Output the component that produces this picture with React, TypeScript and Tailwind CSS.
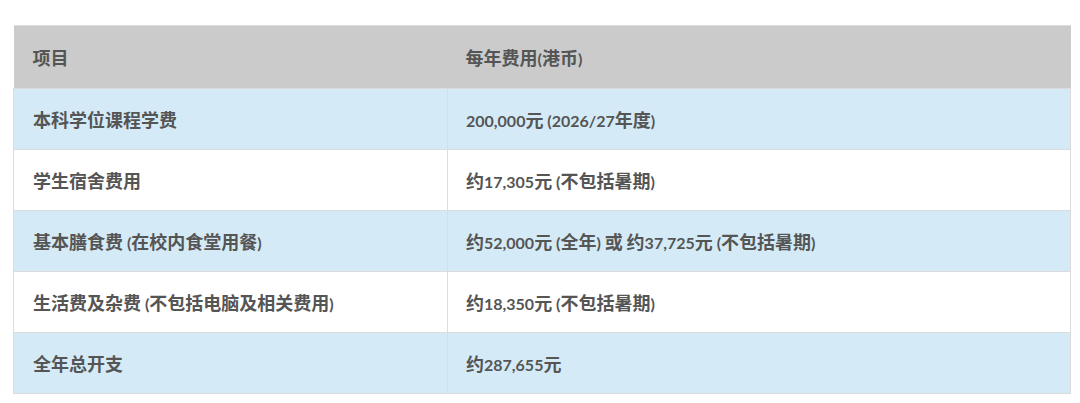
const rows = [
  { item: "本科学位课程学费", cost: "200,000元 (2026/27年度)", blue: true },
  { item: "学生宿舍费用", cost: "约17,305元 (不包括暑期)", blue: false },
  { item: "基本膳食费 (在校内食堂用餐)", cost: "约52,000元 (全年) 或 约37,725元 (不包括暑期)", blue: true },
  { item: "生活费及杂费 (不包括电脑及相关费用)", cost: "约18,350元 (不包括暑期)", blue: false },
  { item: "全年总开支", cost: "约287,655元", blue: true },
];

// CJK glyphs come from a bigger fallback font in the original page
function Mixed({ text }: { text: string }) {
  const parts = text.match(/[\u4e00-\u9fff]+|[^\u4e00-\u9fff]+/g) ?? [];
  return (
    <>
      {parts.map((p, i) =>
        /[\u4e00-\u9fff]/.test(p) ? (
          <span key={i} className="text-[18px] font-['Noto_Sans_CJK_SC',sans-serif]">{p}</span>
        ) : (
          <span key={i}>{p}</span>
        )
      )}
    </>
  );
}

export default function App() {
  return (
    <div className="w-[1080px] h-[403px] bg-white pt-[25px] pl-[13px] font-['Lato','Noto_Sans_CJK_SC',sans-serif]">
      <table className="w-[1058px] border-collapse text-[16px] font-bold text-[#555555] leading-none">
        <thead>
          <tr className="bg-[#cbcbcb] h-[63px] border-t border-[#dcdcdc]">
            <th className="w-[434px] text-left font-bold px-[19px]"><Mixed text="项目" /></th>
            <th className="text-left font-bold px-[18px]"><Mixed text="每年费用(港币)" /></th>
          </tr>
        </thead>
        <tbody>
          {rows.map((r) => (
            <tr key={r.item} className={`h-[61px] border-t border-b border-[#dcdcdc] ${r.blue ? "bg-[#d4ebf7]" : "bg-white"}`}>
              <td className="px-[19px] border-l border-r border-[#dcdcdc]"><Mixed text={r.item} /></td>
              <td className="px-[18px] border-r border-[#dcdcdc]"><Mixed text={r.cost} /></td>
            </tr>
          ))}
        </tbody>
      </table>
    </div>
  );
}
